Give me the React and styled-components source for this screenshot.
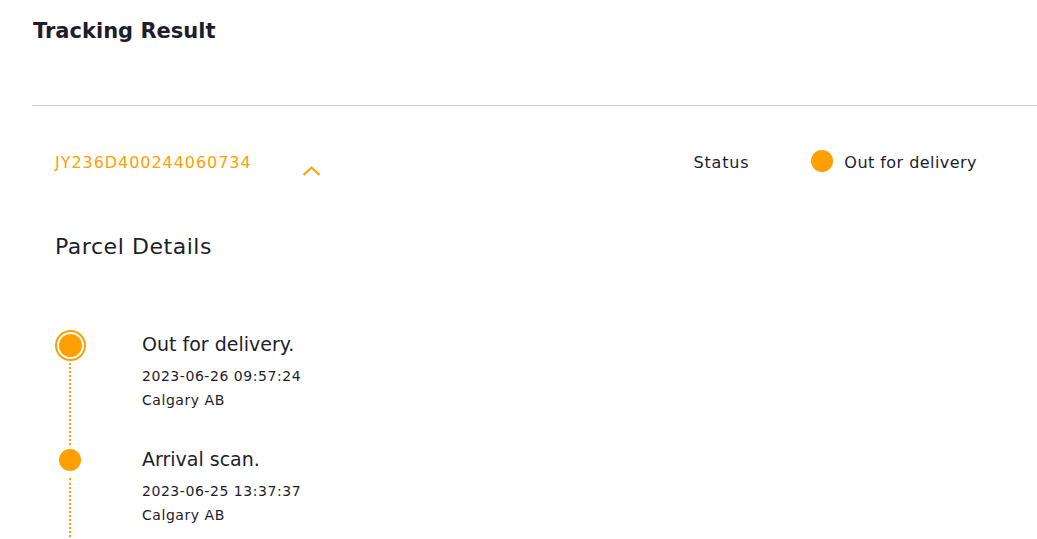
import React from "react";
import styled, { createGlobalStyle } from "styled-components";

const Global = createGlobalStyle`
  html, body { margin: 0; padding: 0; background: #fff; }
  body { font-family: "DejaVu Sans", "Noto Sans", sans-serif; color: #1d1d2b; }
`;

const ORANGE = "#ff9f00";

const Page = styled.div`
  width: 1037px;
  height: 539px;
  overflow: hidden;
  padding-left: 32px;
  box-sizing: border-box;
`;

const Title = styled.h1`
  margin: 0;
  padding: 16px 0 0 1px;
  height: 105px;
  box-sizing: border-box;
  font-size: 21px;
  line-height: 30px;
  font-weight: 700;
  color: #1d1d2b;
`;

const Divider = styled.hr`
  margin: 0;
  border: 0;
  border-top: 1px solid #cfcfcf;
`;

const Card = styled.section`
  padding: 0 60px 0 23px;
`;

const Head = styled.div`
  display: flex;
  align-items: flex-start;
  justify-content: space-between;
  padding-top: 45px;
  height: 126px;
  box-sizing: border-box;
`;

const Number = styled.div`
  display: flex;
  align-items: flex-start;
  gap: 50px;
`;

const Code = styled.span`
  color: ${ORANGE};
  font-size: 16px;
  line-height: 24px;
  letter-spacing: 0.95px;
`;

const Chevron = styled.svg`
  margin-top: 15px;
  display: block;
`;

const Status = styled.div`
  display: flex;
  align-items: center;
  font-size: 16px;
  line-height: 24px;
  letter-spacing: 0.45px;
`;

const Label = styled.span`
  letter-spacing: 0.8px;
  margin-right: 62px;
`;

const Dot = styled.span`
  width: 22px;
  height: 22px;
  border-radius: 50%;
  background: ${ORANGE};
  margin-right: 11px;
  margin-top: -4px;
`;

const Section = styled.h2`
  margin: 0;
  font-size: 22px;
  line-height: 30px;
  font-weight: 500;
  letter-spacing: 0.55px;
  height: 98px;
`;

const Timeline = styled.div`
  display: flex;
  flex-direction: column;
`;

const Item = styled.div`
  display: flex;
  height: ${(p) => p.$h}px;
`;

const Rail = styled.div`
  width: 30px;
  display: flex;
  flex-direction: column;
  align-items: center;
  flex-shrink: 0;
`;

const Marker = styled.span`
  box-sizing: border-box;
  border-radius: 50%;
  flex-shrink: 0;
  ${(p) =>
    p.$active
      ? `width: 31px; height: 31px; border: 2px solid ${ORANGE}; padding: 2px; background: ${ORANGE}; background-clip: content-box;`
      : `width: 22px; height: 22px; background: ${ORANGE};`}
`;

const Line = styled.span`
  flex: 1;
  width: 0;
  border-left: 2px dotted ${ORANGE};
  margin: ${(p) => p.$m};
`;

const Body = styled.div`
  padding-left: 57px;
  margin-top: ${(p) => p.$mt}px;
`;

const EventTitle = styled.div`
  font-size: 19px;
  line-height: 26px;
  margin-bottom: 7px;
`;

const Meta = styled.div`
  font-size: 14px;
  line-height: 24px;
  letter-spacing: 0.55px;
`;

const events = [
  { title: "Out for delivery.", time: "2023-06-26 09:57:24", place: "Calgary AB", active: true, h: 119, mt: 1, m: "2px 0 4px" },
  { title: "Arrival scan.", time: "2023-06-25 13:37:37", place: "Calgary AB", h: 100, mt: -3, m: "7px 0 0" },
];

export default function App() {
  return (
    <Page>
      <Global />
      <Title>Tracking Result</Title>
      <Divider />
      <Card>
        <Head>
          <Number>
            <Code>JY236D400244060734</Code>
            <Chevron width="19" height="10" viewBox="0 0 19 10">
              <polyline points="1.5,9 9.5,1.5 17.5,9" fill="none" stroke={ORANGE} strokeWidth="2" />
            </Chevron>
          </Number>
          <Status>
            <Label>Status</Label>
            <Dot />
            <span>Out for delivery</span>
          </Status>
        </Head>
        <Section>Parcel Details</Section>
        <Timeline>
          {events.map((e) => (
            <Item key={e.time} $h={e.h}>
              <Rail>
                <Marker $active={e.active} />
                <Line $m={e.m} />
              </Rail>
              <Body $mt={e.mt}>
                <EventTitle>{e.title}</EventTitle>
                <Meta>{e.time}</Meta>
                <Meta>{e.place}</Meta>
              </Body>
            </Item>
          ))}
        </Timeline>
      </Card>
    </Page>
  );
}
